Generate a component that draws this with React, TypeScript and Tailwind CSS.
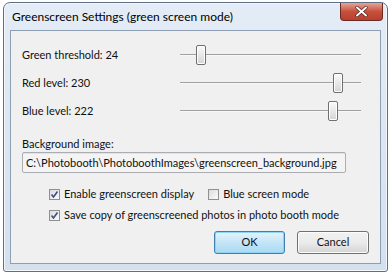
const font = "font-['Lato','Noto_Sans',sans-serif]"

function Slider({ pos }: { pos: number }) {
  return (
    <div className="relative w-[181px] h-[20px]">
      <div className="absolute left-0 right-0 top-[9px] h-[2px] border-t border-[#a0a0a0] border-b border-b-[#f8f8f8] bg-[#e3e3e3]" />
      <div
        className="absolute top-0 w-[10px] h-[20px] rounded-[2px] border border-[#6f6f6f] bg-gradient-to-b from-[#fafafa] via-[#e8e8e8] to-[#d4d4d4] shadow-[inset_0_0_0_1px_#ffffff]"
        style={{ left: pos }}
      />
    </div>
  )
}

function Check({ checked }: { checked: boolean }) {
  return (
    <div className="w-[11px] h-[11px] border border-[#8e8f8f] bg-gradient-to-br from-[#dcdcdc] to-[#fbfbfb] flex items-center justify-center">
      {checked && (
        <svg width="9" height="9" viewBox="0 0 9 9">
          <path d="M1.5 4.5 L3.5 7 L7.5 1.5" fill="none" stroke="#3c4d83" strokeWidth="1.6" />
        </svg>
      )}
    </div>
  )
}

export default function App() {
  return (
    <div className={`w-[391px] h-[274px] bg-white pt-[2px] pl-[3px] ${font} text-[11px] text-[#111] whitespace-nowrap`}>
      <div className="w-[385px] h-[270px] rounded-t-[7px] rounded-b-[3px] border border-[#5d6e85] bg-gradient-to-b from-[#e4ecf6] to-[#d3e0ee] flex flex-col shadow-[inset_0_0_0_1px_#f4f8fc]">
        <div className="h-[27px] flex items-start justify-between">
          <div className="pl-[8px] pt-[6px] text-[12px] text-black leading-[16px]">Greenscreen Settings (green screen mode)</div>
          <div className="mr-[4px] mt-[0px] w-[43px] h-[18px] rounded-b-[4px] border border-[#6b2a24] border-t-0 bg-gradient-to-b from-[#e4a596] via-[#c6503c] to-[#b8402c] flex items-center justify-center">
            <svg width="13" height="11" viewBox="0 0 13 11">
              <path d="M2 1.5 L11 9.5 M11 1.5 L2 9.5" stroke="#4a1a14" strokeWidth="3.2" strokeLinecap="round" />
              <path d="M2 1.5 L11 9.5 M11 1.5 L2 9.5" stroke="#ffffff" strokeWidth="2" strokeLinecap="round" />
            </svg>
          </div>
        </div>
        <div className="mx-[6px] mb-[7px] flex-1 border border-[#8f9fb3] bg-[#f0f0f0] flex flex-col pl-[11px] pt-[10px]">
          {[
            ["Green threshold: 24", 16],
            ["Red level: 230", 153],
            ["Blue level: 222", 148],
          ].map(([label, pos]) => (
            <div key={label as string} className="h-[28px] flex items-center">
              <div className="w-[158px]">{label}</div>
              <Slider pos={pos as number} />
            </div>
          ))}
          <div className="mt-[11px] h-[16px] leading-[16px]">Background image:</div>
          <div className="w-[324px] h-[21px] border border-[#abadb3] rounded-[2px] bg-[#f4f4f4] pl-[3px] leading-[19px] shadow-[inset_0_1px_0_#e2e3ea]">
            C:\Photobooth\PhotoboothImages\greenscreen_background.jpg
          </div>
          <div className="mt-[11px] pl-[27px] flex flex-col gap-[1px]">
            <div className="h-[20px] flex items-center">
              <Check checked />
              <span className="ml-[4px]">Enable greenscreen display</span>
              <div className="ml-[14px]"><Check checked={false} /></div>
              <span className="ml-[4px]">Blue screen mode</span>
            </div>
            <div className="h-[20px] flex items-center">
              <Check checked />
              <span className="ml-[4px]">Save copy of greenscreened photos in photo booth mode</span>
            </div>
          </div>
          <div className="mt-[6px] flex justify-end gap-[12px] pr-[11px]">
            <button className="w-[71px] h-[23px] rounded-[3px] border border-[#3c7fb1] bg-gradient-to-b from-[#e5f4fc] via-[#c4e5f6] to-[#a9d9f2] shadow-[inset_0_0_0_1px_#8fd3f7]">OK</button>
            <button className="w-[72px] h-[23px] rounded-[3px] border border-[#707070] bg-gradient-to-b from-[#f2f2f2] via-[#ebebeb] to-[#d4d4d4] shadow-[inset_0_0_0_1px_#fcfcfc]">Cancel</button>
          </div>
        </div>
      </div>
    </div>
  )
}
